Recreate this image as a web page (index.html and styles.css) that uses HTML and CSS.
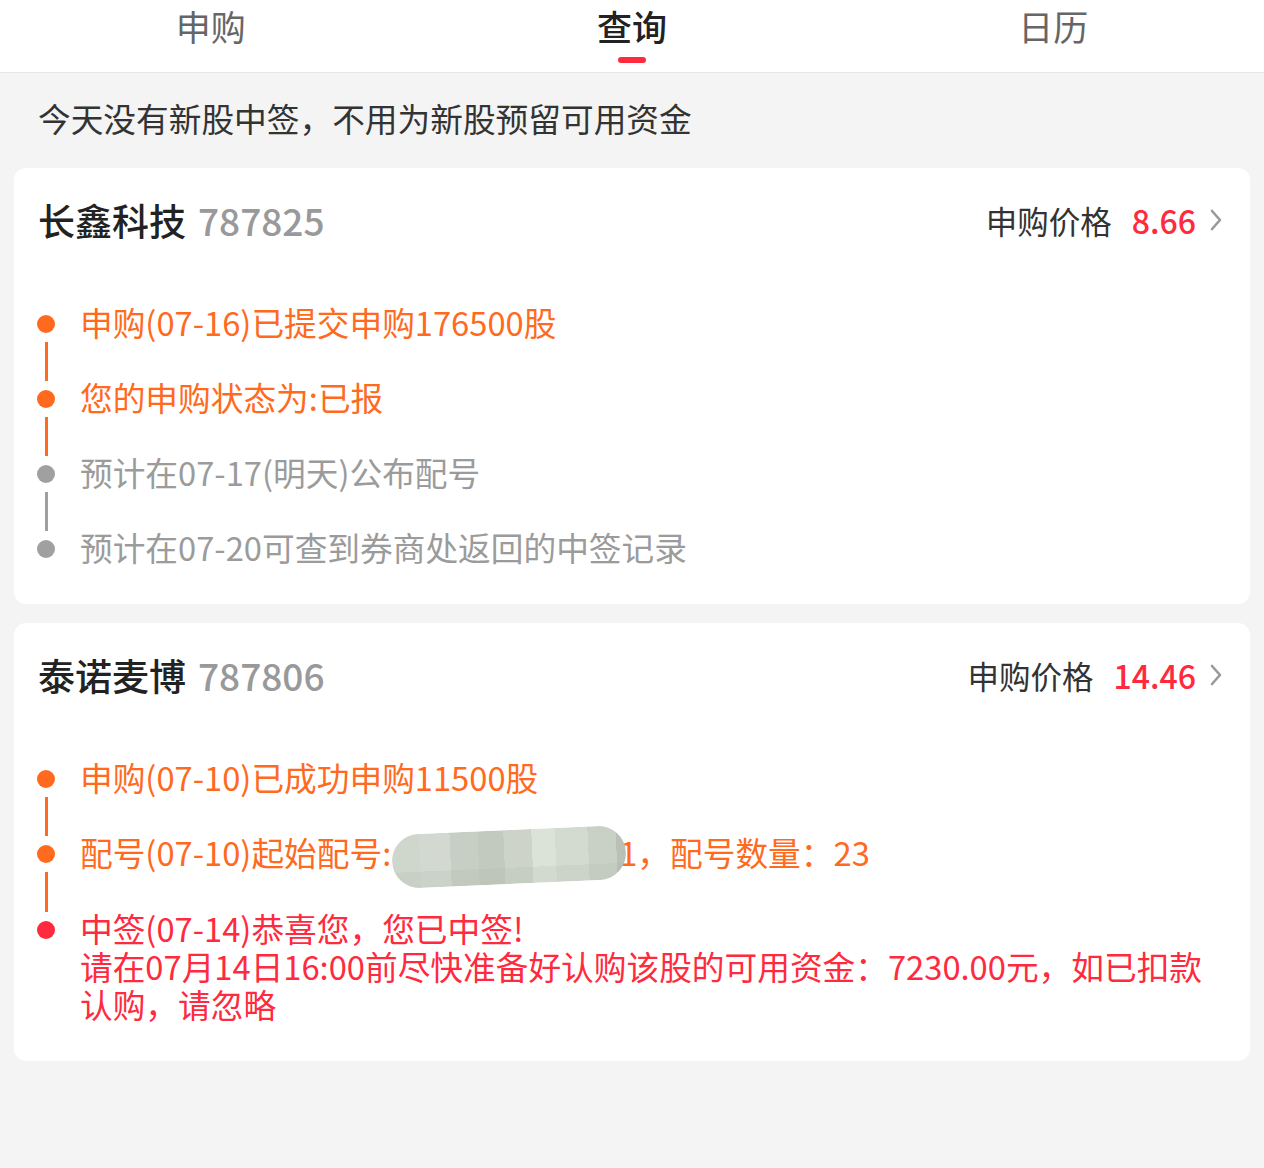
FILE: index.html
```html
<!DOCTYPE html>
<html lang="zh-CN">
<head>
<meta charset="utf-8">
<title>查询</title>
<link rel="stylesheet" href="styles.css">
</head>
<body>
<div class="tabs">
  <div class="tab"><span class="tab-label">申购</span><span class="tab-bar"></span></div>
  <div class="tab active"><span class="tab-label">查询</span><span class="tab-bar"></span></div>
  <div class="tab"><span class="tab-label">日历</span><span class="tab-bar"></span></div>
</div>

<div class="notice">今天没有新股中签，不用为新股预留可用资金</div>

<div class="cards">
  <div class="card">
    <div class="card-head">
      <div class="stock"><span class="stock-name">长鑫科技</span><span class="stock-code">787825</span></div>
      <div class="price"><span class="price-label">申购价格</span><span class="price-value">8.66</span>
        <svg class="chev" width="12" height="22" viewBox="0 0 12 22"><path d="M2 2 L10 11 L2 20" fill="none" stroke="#999" stroke-width="2.6" stroke-linecap="round" stroke-linejoin="round"/></svg>
      </div>
    </div>
    <div class="timeline">
      <div class="item orange"><div class="rail"><span class="dot"></span><span class="line"></span></div><div class="text">申购(07-16)已提交申购176500股</div></div>
      <div class="item orange"><div class="rail"><span class="dot"></span><span class="line"></span></div><div class="text">您的申购状态为:已报</div></div>
      <div class="item gray"><div class="rail"><span class="dot"></span><span class="line"></span></div><div class="text">预计在07-17(明天)公布配号</div></div>
      <div class="item gray last"><div class="rail"><span class="dot"></span></div><div class="text">预计在07-20可查到券商处返回的中签记录</div></div>
    </div>
  </div>

  <div class="card">
    <div class="card-head">
      <div class="stock"><span class="stock-name">泰诺麦博</span><span class="stock-code">787806</span></div>
      <div class="price"><span class="price-label">申购价格</span><span class="price-value">14.46</span>
        <svg class="chev" width="12" height="22" viewBox="0 0 12 22"><path d="M2 2 L10 11 L2 20" fill="none" stroke="#999" stroke-width="2.6" stroke-linecap="round" stroke-linejoin="round"/></svg>
      </div>
    </div>
    <div class="timeline">
      <div class="item orange"><div class="rail"><span class="dot"></span><span class="line"></span></div><div class="text">申购(07-10)已成功申购11500股</div></div>
      <div class="item orange"><div class="rail"><span class="dot"></span><span class="line"></span></div><div class="text">配号(07-10)起始配号:<span class="masked"><span class="blob"></span></span>1，配号数量：23</div></div>
      <div class="item red last"><div class="rail"><span class="dot"></span></div><div class="text">中签(07-14)恭喜您，您已中签!<br>请在07月14日16:00前尽快准备好认购该股的可用资金：7230.00元，如已扣款<br>认购，请忽略</div></div>
    </div>
  </div>
</div>
</body>
</html>
```
FILE: styles.css
```css
* { box-sizing: border-box; }
html, body { margin: 0; padding: 0; }
body {
  background: #f4f4f4;
  font-family: "Noto Sans CJK SC", "Noto Sans", sans-serif;
  color: #222;
  width: 1264px;
  min-height: 1168px;
}

.tabs {
  display: grid;
  grid-template-columns: repeat(3, 1fr);
  height: 73px;
  background: #fff;
  border-bottom: 1px solid #e6e6e6;
}
.tab {
  display: flex;
  flex-direction: column;
  align-items: center;
  padding-top: 3px;
}
.tab-label {
  font-size: 35px;
  line-height: 46px;
  color: #666;
}
.tab-bar {
  width: 28px;
  height: 6px;
  margin-top: 8px;
  border-radius: 3px;
  background: transparent;
}
.tab.active .tab-label { color: #222; font-weight: 500; }
.tab.active .tab-bar { background: #ff2a3d; }

.notice {
  padding: 23px 38px 28px;
  font-size: 32.7px;
  line-height: 44px;
  color: #333;
}

.cards {
  display: flex;
  flex-direction: column;
  gap: 19px;
  padding: 0 14px;
}
.card {
  background: #fff;
  border-radius: 12px;
  padding: 27px 28px 38px 24px;
}
.card-head {
  display: flex;
  justify-content: space-between;
  align-items: center;
  height: 50px;
}
.stock { display: flex; align-items: baseline; }
.stock-name { font-size: 37px; font-weight: 500; color: #222; }
.stock-code { font-size: 37px; font-weight: 500; color: #999; margin-left: 12px; }
.price { display: flex; align-items: center; }
.price-label { font-size: 31.5px; color: #333; }
.price-value { font-size: 32px; font-weight: 500; color: #ff2a3d; margin-left: 20px; }
.chev { margin-left: 14px; }

.timeline {
  margin-top: 58px;
  margin-left: -1px;
}
.item {
  display: flex;
}
.rail {
  width: 43px;
  flex: none;
  display: flex;
  flex-direction: column;
}
.dot {
  width: 18px;
  height: 18px;
  border-radius: 50%;
  margin-top: 12px;
  flex: none;
}
.line {
  width: 3px;
  margin: 9px 0 -3px 8px;
  flex: 1;
}
.text {
  font-size: 32.7px;
  line-height: 38px;
  white-space: nowrap;
  padding-bottom: 37px;
}
.item.last .text { padding-bottom: 0; }
.orange .text { color: #ff6a1e; }
.orange .dot, .orange .line { background: #ff6a1e; }
.gray .text { color: #9b9b9b; }
.gray .dot, .gray .line { background: #a0a0a0; }
.red .text { color: #ff2a3d; }
.red .dot { background: #ff2a3d; }

.masked {
  display: inline-block;
  position: relative;
  width: 228px;
  height: 30px;
  vertical-align: middle;
}
.blob {
  position: absolute;
  left: 1px;
  top: -12px;
  width: 234px;
  height: 54px;
  border-radius: 27px;
  transform: rotate(-2.5deg);
  background:
    linear-gradient(180deg, rgba(255,255,255,0) 0 70%, rgba(170,178,165,0.18) 70% 100%),
    linear-gradient(90deg,
      #cfd6cc 0 12%, #d3d9d0 12% 25%, #c7cec3 25% 37%, #c2c9be 37% 48%,
      #cdd3c8 48% 60%, #dbe2d8 60% 70%, #d3dad0 70% 84%, #c9d0c6 84% 96%, #b9c0b6 96% 100%);
}
```
